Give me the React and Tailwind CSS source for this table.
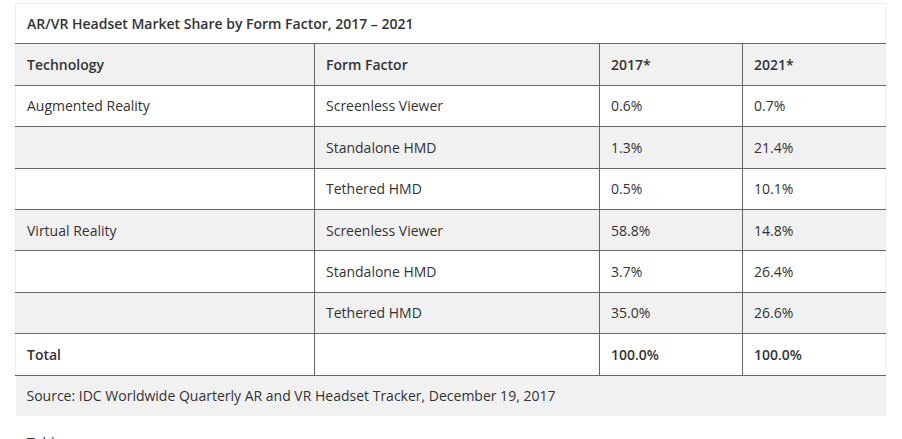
import React from "react";

const rows = [
  { tech: "Augmented Reality", form: "Screenless Viewer", y17: "0.6%", y21: "0.7%" },
  { tech: "", form: "Standalone HMD", y17: "1.3%", y21: "21.4%" },
  { tech: "", form: "Tethered HMD", y17: "0.5%", y21: "10.1%" },
  { tech: "Virtual Reality", form: "Screenless Viewer", y17: "58.8%", y21: "14.8%" },
  { tech: "", form: "Standalone HMD", y17: "3.7%", y21: "26.4%" },
  { tech: "", form: "Tethered HMD", y17: "35.0%", y21: "26.6%" },
];

const cell = "h-[41.4px] px-[11px] py-0 border-b border-[#666] text-left align-middle";

export default function App() {
  return (
    <div className="bg-white min-h-screen pt-[3px] pl-[15px] text-[14px] text-[#333]" style={{ fontFamily: '"Open Sans", sans-serif' }}>
      <table className="w-[870px] table-fixed border-collapse">
        <colgroup>
          <col className="w-[299px]" />
          <col className="w-[285px]" />
          <col className="w-[143px]" />
          <col className="w-[143px]" />
        </colgroup>
        <tbody>
          <tr className="bg-white">
            <td colSpan={4} className="h-[40.4px] px-[11px] py-0 border-b border-[#666] border-t border-t-[#eee] border-x border-x-[#eee] text-left align-middle font-semibold">
              AR/VR Headset Market Share by Form Factor, 2017 – 2021
            </td>
          </tr>
          <tr className="bg-[#f1f1f1] font-semibold">
            <td className={`${cell} border-l border-l-[#eee]`}>Technology</td>
            <td className={`${cell} border-l border-l-[#666]`}>Form Factor</td>
            <td className={`${cell} border-l border-l-[#666]`}>2017*</td>
            <td className={`${cell} border-l border-l-[#666] border-r border-r-[#eee]`}>2021*</td>
          </tr>
          {rows.map((r, i) => (
            <tr key={i} className={i % 2 === 1 ? "bg-[#f1f1f1]" : "bg-white"}>
              <td className={`${cell} border-l border-l-[#eee]`}>{r.tech}</td>
              <td className={`${cell} border-l border-l-[#666]`}>{r.form}</td>
              <td className={`${cell} border-l border-l-[#666]`}>{r.y17}</td>
              <td className={`${cell} border-l border-l-[#666] border-r border-r-[#eee]`}>{r.y21}</td>
            </tr>
          ))}
          <tr className="bg-white font-semibold">
            <td className={`${cell} border-l border-l-[#eee]`}>Total</td>
            <td className={`${cell} border-l border-l-[#666]`}></td>
            <td className={`${cell} border-l border-l-[#666]`}>100.0%</td>
            <td className={`${cell} border-l border-l-[#666] border-r border-r-[#eee]`}>100.0%</td>
          </tr>
          <tr className="bg-[#f1f1f1]">
            <td colSpan={4} className="h-[41px] px-[11px] text-left align-middle">
              Source: IDC Worldwide Quarterly AR and VR Headset Tracker, December 19, 2017
            </td>
          </tr>
        </tbody>
      </table>
      <p className="mt-[16px] pl-[12px]">Table</p>
    </div>
  );
}
